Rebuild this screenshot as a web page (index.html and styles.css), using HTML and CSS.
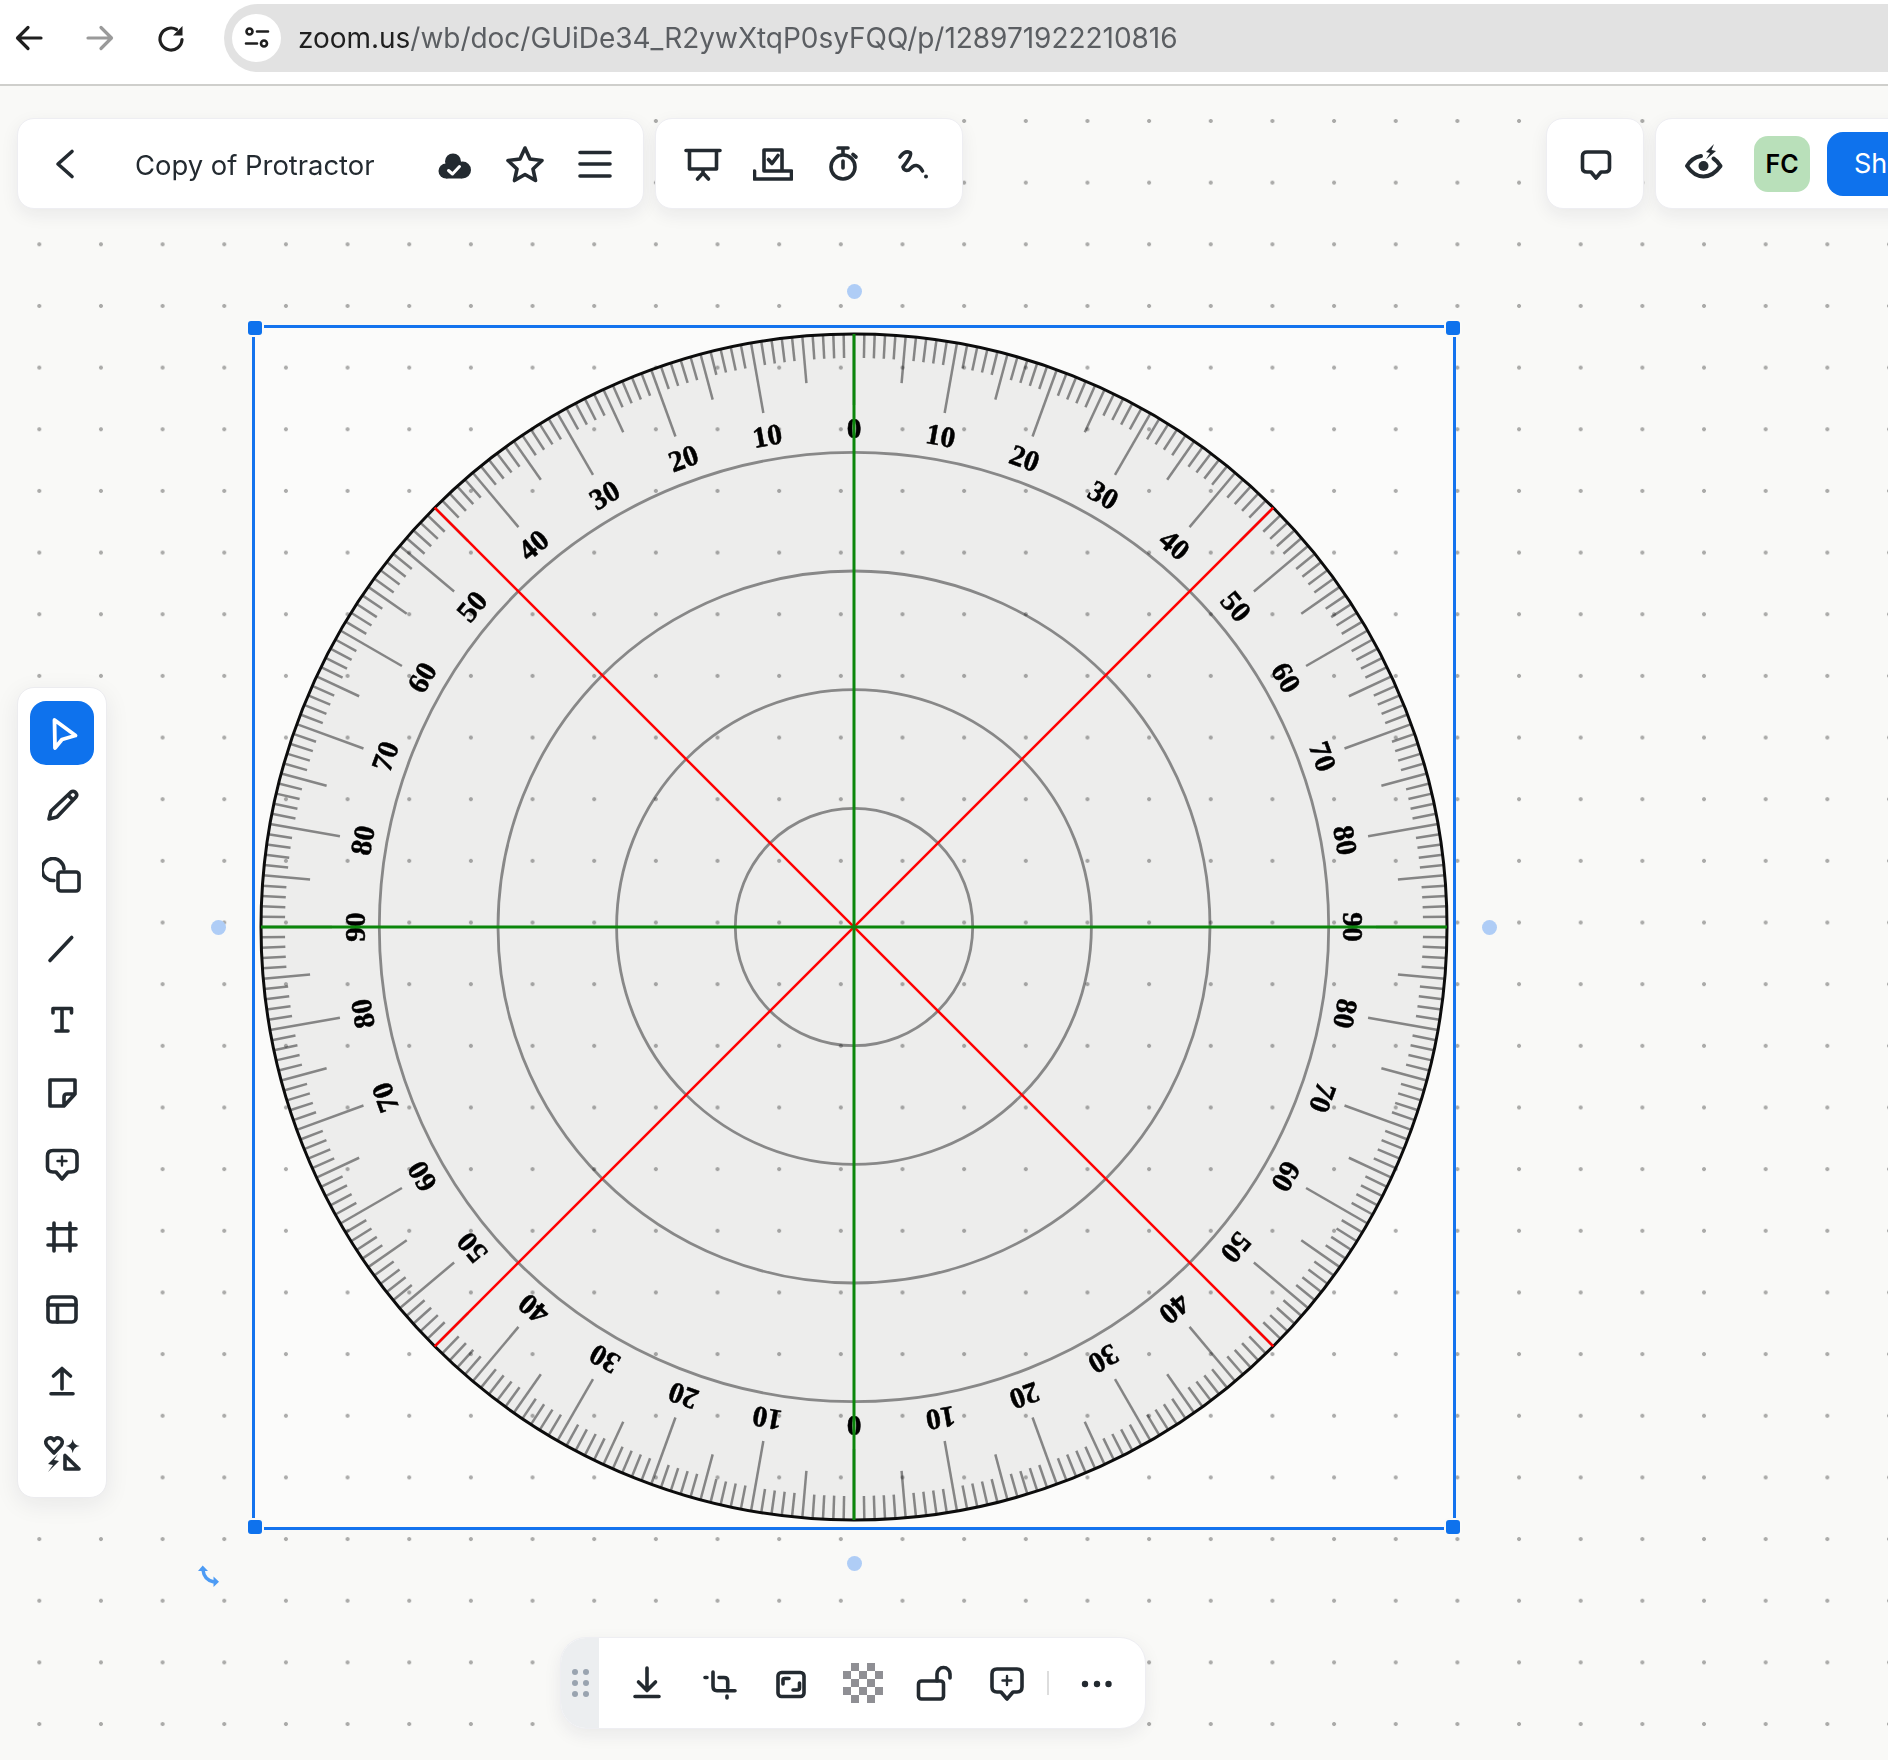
FILE: index.html
```html
<!DOCTYPE html>
<html lang="en">
<head>
<meta charset="utf-8">
<title>Copy of Protractor</title>
<link rel="stylesheet" href="styles.css">
</head>
<body>
<header class="chrome">
  <svg class="nav" viewBox="0 0 30 30"><path d="M27 15H4M14 4.500 3.500 15 14 25.500"/></svg>
  <svg class="nav nav-off" viewBox="0 0 30 30"><path d="M3 15H26M16 4.500 26.500 15 16 25.500"/></svg>
  <svg class="nav" viewBox="0 0 30 30"><path d="M26 16.500A11 11 0 1 1 20.500 6.500"/><path class="solid" d="M26.500 3V12.500H17Z"/></svg>
  <div class="omnibox">
    <span class="site">
      <svg viewBox="0 0 28 24"><circle cx="6.500" cy="5.500" r="3"/><path d="M14 5.500H25M3 17.500H14"/><circle cx="21" cy="17.500" r="3"/></svg>
    </span>
    <span class="url"><b>zoom.us</b>/wb/doc/GUiDe34_R2ywXtqP0syFQQ/p/128971922210816</span>
  </div>
</header>

<main class="canvas">
  <svg class="protractor" viewBox="-600 -600 1200 1200">
    <defs>
      <g id="tenth">
        <line class="tick" y1="-593" y2="-569" transform="rotate(1)"/>
        <line class="tick" y1="-593" y2="-569" transform="rotate(2)"/>
        <line class="tick" y1="-593" y2="-569" transform="rotate(3)"/>
        <line class="tick" y1="-593" y2="-569" transform="rotate(4)"/>
        <line class="tick" y1="-593" y2="-546" transform="rotate(5)"/>
        <line class="tick" y1="-593" y2="-569" transform="rotate(6)"/>
        <line class="tick" y1="-593" y2="-569" transform="rotate(7)"/>
        <line class="tick" y1="-593" y2="-569" transform="rotate(8)"/>
        <line class="tick" y1="-593" y2="-569" transform="rotate(9)"/>
        <line class="tick" y1="-593" y2="-522" transform="rotate(10)"/>
      </g>
      <g id="quarter">
        <use href="#tenth"/>
        <use href="#tenth" transform="rotate(10)"/>
        <use href="#tenth" transform="rotate(20)"/>
        <use href="#tenth" transform="rotate(30)"/>
        <use href="#tenth" transform="rotate(40)"/>
        <use href="#tenth" transform="rotate(50)"/>
        <use href="#tenth" transform="rotate(60)"/>
        <use href="#tenth" transform="rotate(70)"/>
        <use href="#tenth" transform="rotate(80)"/>
      </g>
    </defs>
    <rect class="sheet" x="-600" y="-600" width="1200" height="1200"/>
    <circle class="disc" r="593"/>
    <use href="#quarter"/>
    <use href="#quarter" transform="rotate(90)"/>
    <use href="#quarter" transform="rotate(180)"/>
    <use href="#quarter" transform="rotate(270)"/>
    <circle class="ring" r="118.700"/>
    <circle class="ring" r="237.400"/>
    <circle class="ring" r="356"/>
    <circle class="ring" r="474.700"/>
    <circle class="rim" r="593"/>
    <g class="labels">
      <text transform="rotate(0) translate(0,-489)">0</text>
      <text transform="rotate(10) translate(0,-489)">10</text>
      <text transform="rotate(20) translate(0,-489)">20</text>
      <text transform="rotate(30) translate(0,-489)">30</text>
      <text transform="rotate(40) translate(0,-489)">40</text>
      <text transform="rotate(50) translate(0,-489)">50</text>
      <text transform="rotate(60) translate(0,-489)">60</text>
      <text transform="rotate(70) translate(0,-489)">70</text>
      <text transform="rotate(80) translate(0,-489)">80</text>
      <text transform="rotate(90) translate(0,-489)">90</text>
      <text transform="rotate(100) translate(0,-489)">80</text>
      <text transform="rotate(110) translate(0,-489)">70</text>
      <text transform="rotate(120) translate(0,-489)">60</text>
      <text transform="rotate(130) translate(0,-489)">50</text>
      <text transform="rotate(140) translate(0,-489)">40</text>
      <text transform="rotate(150) translate(0,-489)">30</text>
      <text transform="rotate(160) translate(0,-489)">20</text>
      <text transform="rotate(170) translate(0,-489)">10</text>
      <text transform="rotate(180) translate(0,-489)">0</text>
      <text transform="rotate(-170) translate(0,-489)">10</text>
      <text transform="rotate(-160) translate(0,-489)">20</text>
      <text transform="rotate(-150) translate(0,-489)">30</text>
      <text transform="rotate(-140) translate(0,-489)">40</text>
      <text transform="rotate(-130) translate(0,-489)">50</text>
      <text transform="rotate(-120) translate(0,-489)">60</text>
      <text transform="rotate(-110) translate(0,-489)">70</text>
      <text transform="rotate(-100) translate(0,-489)">80</text>
      <text transform="rotate(-90) translate(0,-489)">90</text>
      <text transform="rotate(-80) translate(0,-489)">80</text>
      <text transform="rotate(-70) translate(0,-489)">70</text>
      <text transform="rotate(-60) translate(0,-489)">60</text>
      <text transform="rotate(-50) translate(0,-489)">50</text>
      <text transform="rotate(-40) translate(0,-489)">40</text>
      <text transform="rotate(-30) translate(0,-489)">30</text>
      <text transform="rotate(-20) translate(0,-489)">20</text>
      <text transform="rotate(-10) translate(0,-489)">10</text>
    </g>
    <line class="red" x1="-419.300" y1="-419.300" x2="419.300" y2="419.300"/>
    <line class="red" x1="419.300" y1="-419.300" x2="-419.300" y2="419.300"/>
    <line class="green" y1="-593" y2="593"/>
    <line class="green" x1="-593" x2="593"/>
  </svg>
  <div class="dots"></div>

  <div class="selection">
    <span class="handle h-tl"></span>
    <span class="handle h-tr"></span>
    <span class="handle h-bl"></span>
    <span class="handle h-br"></span>
    <span class="pip p-t"></span>
    <span class="pip p-l"></span>
    <span class="pip p-r"></span>
    <span class="pip p-b"></span>
  </div>
  <svg class="rotate" viewBox="0 0 23 23"><path d="M6 5Q7 15 17 17"/><path class="solid" d="M1 6 5.700 0.500 11 6ZM16.500 11.500 22 16.700 16.500 22Z"/></svg>

  <div class="topbar">
    <div class="panel doc">
      <svg class="ico" viewBox="0 0 40 40"><path d="M27 7.500 13 20 27 32.500"/></svg>
      <span class="title">Copy of Protractor</span>
      <svg class="ico ico-end" viewBox="0 0 40 40"><circle class="solid" cx="18" cy="17.500" r="8"/><circle class="solid" cx="11" cy="27" r="7.500"/><circle class="solid" cx="27.500" cy="26" r="8.500"/><path class="solid" d="M11 20H27V34.500H11Z"/><path class="cut" d="M13.500 26.500 17.500 30 24.500 22.500"/></svg>
      <svg class="ico" viewBox="0 0 40 40"><path d="M20 4 25 15 37 16.500 28 25 30.500 36.500 20 30.500 9.500 36.500 12 25 3 16.500 15 15Z"/></svg>
      <svg class="ico" viewBox="0 0 40 40"><path d="M5 8.500H35M5 20H35M5 32H35"/></svg>
    </div>
    <div class="panel actions">
      <svg class="ico" viewBox="0 0 40 40"><path d="M3 6.500H37M6.500 6.500V25H33.500V6.500M20 25V29M14.500 35 20 29 25.500 35"/></svg>
      <svg class="ico" viewBox="0 0 40 40"><path d="M11 6H29V27H11ZM1.500 27V35H38.500V27H11M15.500 15.500 19 19.500 25 11.500"/></svg>
      <svg class="ico" viewBox="0 0 40 40"><circle cx="20" cy="23" r="12"/><path d="M15 4H25M20 4V10M20 17V24M30 10.500 33 13"/></svg>
      <svg class="ico" viewBox="0 0 40 40"><path d="M7 13Q12 6 17 8.500Q20 11 10 23Q11 27.500 16 26Q20 21 23.500 21.500Q27 22 29.500 27"/><circle class="solid" cx="33" cy="32.500" r="2"/></svg>
    </div>
    <div class="panel chat">
      <svg class="ico" viewBox="0 0 40 40"><path d="M11 8H29Q33.500 8 33.500 12V24Q33.500 28 29 28H25L20 34 15 28H11Q6.500 28 6.500 24V12Q6.500 8 11 8Z"/></svg>
    </div>
    <div class="panel people">
      <svg class="ico ico-eye" viewBox="0 3.500 40 40"><path d="M17 15.500Q8 17 3 25.500Q10 36 19.500 36Q29 36 36.500 25.500Q34 21 29.500 18"/><circle class="solid" cx="19.500" cy="25.500" r="5"/><path class="solid" d="M30 3.500 22 11.500 26 12.500 22 19 32 10.500 27.500 9.500Z"/></svg>
      <span class="avatar">FC</span>
      <span class="share">Share</span>
    </div>
  </div>

  <nav class="tools">
    <span class="tool tool-on"><svg class="ico" viewBox="0 0 40 40"><path d="M12.500 7 33.500 22.500 20 26.500 13 35Z"/></svg></span>
    <span class="tool"><svg class="ico" viewBox="0 0 40 40"><path d="M7 34 9 26 29 7Q31 5.500 33 7L34 8Q35.500 10 34 12L15 32ZM26 10 31 15"/></svg></span>
    <span class="tool"><svg class="ico" viewBox="0 0 40 40"><path d="M22 12A11 11 0 1 0 12 23.500"/><rect x="16" y="15" width="21" height="19" rx="3"/></svg></span>
    <span class="tool"><svg class="ico" viewBox="0 0 40 40"><path d="M8 31.500 29.700 8.500"/></svg></span>
    <span class="tool"><svg class="ico" viewBox="0 0 40 40"><path d="M11 12V7.500H29.500V12M20 7.500V30M14 30H26"/></svg></span>
    <span class="tool"><svg class="ico" viewBox="0 0 40 40"><path d="M8 7H33V21L22 33H8ZM33 21H25Q22 21 22 24V33"/></svg></span>
    <span class="tool"><svg class="ico" viewBox="0 0 40 40"><path d="M11 5.500H29Q35 5.500 35 11V22Q35 27 29 27H26L20 34 14 27H11Q5.500 27 5.500 22V11Q5.500 5.500 11 5.500Z"/><path class="thin" d="M20 11.500V20.500M15.500 16H24.500"/></svg></span>
    <span class="tool"><svg class="ico" viewBox="0 0 40 40"><path d="M12 6V34M28 6V34M6 11.700H34M6 28H34"/></svg></span>
    <span class="tool"><svg class="ico" viewBox="0 0 40 40"><rect x="6" y="8" width="28" height="25" rx="4"/><path d="M6 16H34M15.500 16V33"/></svg></span>
    <span class="tool"><svg class="ico" viewBox="0 0 40 40"><path d="M20 8V28M11.500 15 20 7.500 28.500 15M9 32.700H31"/></svg></span>
    <span class="tool"><svg class="ico" viewBox="0 0 40 40"><path d="M12 20 5 12.500Q2 8 6 5.500Q10 3.500 12 7.500Q14 3.500 18 5.500Q22 8 19 12.500Z"/><path class="solid" d="M30.700 6Q31.500 12 37.700 13Q31.500 14 30.700 20Q30 14 23.700 13Q30 12 30.700 6Z"/><path class="solid" d="M16 21 6 31 11 32 6 39 17 28 12 27Z"/><path d="M23 22.500V36H37Z"/></svg></span>
  </nav>

  <div class="panel dock">
    <span class="grip"><i></i><i></i><i></i><i></i><i></i><i></i></span>
    <div class="dock-icons">
      <svg class="ico" viewBox="0 0 40 40"><path d="M20 5V27M11.500 19 20 27.500 28.500 19M8 33.500H32"/></svg>
      <svg class="ico" viewBox="0 0 40 40"><path d="M6 14.500H8M14 9V23Q14 27.700 18 27.700H36M20 14.500H25Q28.700 14.500 28.700 18V25M28 33V35"/></svg>
      <svg class="ico" viewBox="0 0 40 40"><rect x="7" y="9.500" width="26" height="24" rx="3.500"/><path d="M12 21V17Q12 15.500 14 15.500H18M28.500 20V25Q28.500 27 26 27H22"/></svg>
      <span class="checker"></span>
      <svg class="ico" viewBox="0 0 40 40"><rect x="3.500" y="18" width="25" height="18" rx="3"/><path d="M22 18V11A6.500 6.500 0 0 1 35 11V15"/></svg>
      <svg class="ico" viewBox="0 0 40 40"><path d="M10 6H30Q35 6 35 11V24Q35 29 30 29H26L20 36 14 29H10Q5 29 5 24V11Q5 6 10 6Z"/><path class="thin" d="M20 13V22M15.500 17.500H24.500"/></svg>
      <span class="sep"></span>
      <svg class="ico more" viewBox="0 0 40 40"><circle class="solid" cx="8" cy="21" r="3.200"/><circle class="solid" cx="20" cy="21" r="3.200"/><circle class="solid" cx="31.500" cy="21" r="3.200"/></svg>
    </div>
  </div>
</main>
</body>
</html>
```

FILE: styles.css
```css
* { box-sizing: border-box; }
html, body { margin: 0; height: 100%; }
body {
  width: 1888px;
  height: 1760px;
  overflow: hidden;
  display: flex;
  flex-direction: column;
  background: #f9f9f7;
  font-family: Inter, "Liberation Sans", sans-serif;
  color: #232a30;
}

/* browser bar */
.chrome {
  height: 86px;
  flex: none;
  display: flex;
  align-items: flex-start;
  gap: 41px;
  padding: 4px 0 0 14px;
  background: #fff;
  border-bottom: 2px solid #cfcfcc;
}
.nav {
  width: 30px;
  height: 30px;
  margin-top: 19px;
  fill: none;
  stroke: #1f1f1f;
  stroke-width: 3.200;
  stroke-linecap: round;
  stroke-linejoin: round;
  flex: none;
}
.nav .solid { fill: #1f1f1f; stroke: none; }
.nav-off { stroke: #9a9a9a; }
.omnibox {
  flex: 1;
  height: 68px;
  margin-left: -3px;
  margin-right: -60px;
  display: flex;
  align-items: center;
  gap: 17px;
  padding-left: 8px;
  background: #e2e2e2;
  border-radius: 34px;
}
.site {
  width: 49px;
  height: 48px;
  flex: none;
  display: flex;
  align-items: center;
  justify-content: center;
  background: #fff;
  border-radius: 50%;
}
.site svg {
  width: 28px;
  height: 24px;
  fill: none;
  stroke: #1f1f1f;
  stroke-width: 2.600;
  stroke-linecap: round;
}
.url {
  font-size: 28px;
  letter-spacing: -0.030px;
  color: #5b5e62;
  white-space: nowrap;
}
.url b { font-weight: 400; color: #1f1f1f; }

/* whiteboard */
.canvas {
  position: relative;
  flex: 1;
  background-color: #f9f9f7;
}
.protractor {
  position: absolute;
  left: 254.300px;
  top: 241px;
  width: 1200px;
  height: 1200px;
  filter: blur(0.350px);
}
.sheet { fill: rgba(255, 255, 255, 0.400); }
.disc { fill: #ededec; }
.tick { stroke: #858585; stroke-width: 2.500; }
.ring { fill: none; stroke: #888; stroke-width: 2.800; }
.rim { fill: none; stroke: #0c0c0c; stroke-width: 3; }
.red { stroke: #f00; stroke-width: 2.500; }
.green { stroke: #0b860b; stroke-width: 3; }
.labels text {
  font-family: "Liberation Serif", serif;
  font-weight: 700;
  font-size: 29.500px;
  text-anchor: middle;
  fill: #000;
  stroke: #000;
  stroke-width: 0.500;
}
.dots {
  position: absolute;
  inset: 0;
  mix-blend-mode: multiply;
  background-image: radial-gradient(circle at center, #afafaf 0, #afafaf 1.600px, transparent 2.300px);
  background-size: 61.670px 61.670px;
  background-position: 8.470px 4.170px;
}

.selection {
  position: absolute;
  left: 252px;
  top: 239px;
  width: 1204px;
  height: 1205px;
  border: 3px solid #1473ee;
}
.handle {
  position: absolute;
  width: 14px;
  height: 14px;
  background: #0e72ed;
  border-radius: 3px;
  box-shadow: 0 0 0 2px #fafaf8;
}
.h-tl { left: -7px; top: -7px; }
.h-tr { right: -7px; top: -7px; }
.h-bl { left: -7px; bottom: -7px; }
.h-br { right: -7px; bottom: -7px; }
.pip {
  position: absolute;
  width: 15px;
  height: 15px;
  background: #afcdf6;
  border-radius: 50%;
}
.p-t { left: 50%; top: -44px; margin-left: -7.500px; }
.p-b { left: 50%; bottom: -44px; margin-left: -7.500px; }
.p-l { left: -44px; top: 50%; margin-top: -7.500px; }
.p-r { right: -44px; top: 50%; margin-top: -7.500px; }
.rotate {
  position: absolute;
  left: 197px;
  top: 1479px;
  width: 23px;
  height: 23px;
  fill: none;
  stroke: #4d9bf4;
  stroke-width: 3.400;
}
.rotate .solid { fill: #4d9bf4; stroke: none; }

/* shared chrome of floating panels */
.panel {
  background: #fff;
  border-radius: 17px;
  border: 1px solid #eeeef2;
  box-shadow: 0 6px 18px rgba(30, 30, 50, 0.07);
}
.ico {
  width: 40px;
  height: 40px;
  flex: none;
  fill: none;
  stroke: #232a30;
  stroke-width: 3.600;
  stroke-linecap: round;
  stroke-linejoin: round;
}
.ico .solid { fill: #232a30; stroke: none; }
.ico .cut { stroke: #fff; stroke-width: 3; }
.ico .thin { stroke-width: 2.400; }
.ico-eye { stroke-width: 4; }

/* top bar */
.topbar {
  position: relative;
  display: flex;
  align-items: stretch;
  height: 91px;
  margin: 32px -87px 0 17px;
  gap: 11px;
}
.doc, .actions, .people { display: flex; align-items: center; }
.doc {
  width: 627px;
  gap: 30px;
  padding: 0 28px 0 27px;
}
.title {
  margin-left: 20px;
  padding-top: 2px;
  font-size: 27.400px;
  white-space: nowrap;
  color: #232a30;
}
.ico-end { margin-left: auto; }
.actions { gap: 30px; padding: 0 27px; width: 308px; }
.chat {
  width: 98px;
  margin-left: auto;
  padding-left: 1px;
  display: flex;
  align-items: center;
  justify-content: center;
}
.people { width: 320px; padding-left: 28px; }
.avatar {
  width: 56px;
  height: 56px;
  margin-left: 30px;
  flex: none;
  display: flex;
  align-items: center;
  justify-content: center;
  background: #b9e0ba;
  border-radius: 14px;
  font-size: 25px;
  font-weight: 600;
  color: #000;
}
.share {
  margin-left: 17px;
  width: 130px;
  height: 64px;
  flex: none;
  display: flex;
  align-items: center;
  padding-left: 27px;
  background: #0e72ed;
  border-radius: 16px;
  font-size: 27px;
  color: #fff;
}

/* left toolbar */
.tools {
  position: absolute;
  left: 17px;
  top: 601px;
  width: 90px;
  padding: 13px 12px 12px;
  display: flex;
  flex-direction: column;
  gap: 8px;
  background: #fff;
  border-radius: 17px;
  border: 1px solid #ececef;
  box-shadow: 0 6px 24px rgba(30, 30, 50, 0.08);
}
.tool {
  width: 64px;
  height: 64px;
  display: flex;
  align-items: center;
  justify-content: center;
  border-radius: 16px;
}
.tool-on { background: #0e72ed; }
.tool-on .ico { stroke: #fff; stroke-width: 3.800; }

/* bottom dock */
.dock {
  position: absolute;
  left: 560px;
  top: 1551px;
  width: 586px;
  height: 92px;
  display: flex;
  overflow: hidden;
  border-radius: 26px;
}
.grip {
  width: 38px;
  flex: none;
  display: grid;
  grid-template-columns: 6px 6px;
  grid-auto-rows: 6px;
  gap: 5px;
  align-content: center;
  justify-content: center;
  background: #eceef0;
}
.grip i { background: #9aa4b0; border-radius: 50%; }
.dock-icons {
  flex: 1;
  display: flex;
  align-items: center;
  gap: 32px;
  padding-left: 28px;
}
.checker {
  width: 40px;
  height: 40px;
  flex: none;
  background: repeating-conic-gradient(#8f8f94 0 25%, transparent 0 50%) 0 0 / 16px 16px;
}
.sep {
  width: 2px;
  height: 24px;
  margin-left: -12px;
  flex: none;
  background: #ddd;
}
.more { margin-left: -4px; }
```
